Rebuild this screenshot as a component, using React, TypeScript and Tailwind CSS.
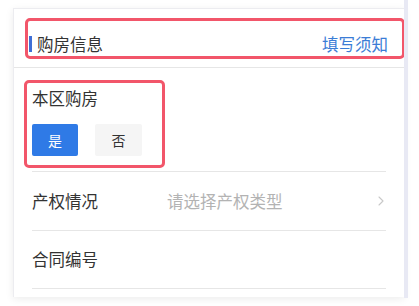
import { ChevronRight } from 'lucide-react';

const font = { fontFamily: '"Noto Sans CJK SC", "Noto Sans", sans-serif' };

export default function App() {
  return (
    <div className="flex w-[419px] h-[306px] bg-white overflow-hidden" style={font}>
      <div className="w-[13px] shrink-0" />
      {/* card */}
      <div className="mt-2 w-[391px] h-[289px] flex flex-col bg-white border-l border-t border-[#ececf0] shadow-[0_2px_8px_rgba(0,0,0,0.08)]">
        {/* header */}
        <div className="pt-[9px] pl-[11px] pb-2 border-b border-[#e6e6e6]">
          <div className="h-[41px] w-[380px] rounded-[5px] border-[3px] border-[#f2566a] flex items-start pt-[12px] pl-[1px] pr-[14px]">
            <div className="w-[3px] h-4 mt-[3px] bg-[#3f6fd6]" />
            <span className="ml-[5px] text-[16.5px] leading-[22px] text-[#333]">购房信息</span>
            <span className="ml-auto text-[16.5px] leading-[22px] text-[#3b7dd6]">填写须知</span>
          </div>
        </div>
        {/* 本区购房 */}
        <div className="mx-[18px] pt-3 pb-[3px] border-b border-[#e6e6e6]">
          <div className="-ml-2 w-[141px] h-[88px] rounded-[5px] border-[3px] border-[#f2566a] pl-[5px] pt-[4px]">
            <div className="text-[16.5px] leading-[22px] text-[#333]">本区购房</div>
            <div className="mt-[15px] flex gap-[17px]">
              <button className="w-[46px] h-8 rounded-[2px] bg-[#2f7ae6] text-white text-[14px]">是</button>
              <button className="w-[47px] h-8 rounded-[2px] bg-[#f5f5f5] text-[#333] text-[14px]">否</button>
            </div>
          </div>
        </div>
        {/* 产权情况 */}
        <div className="mx-[18px] h-[59px] flex items-center border-b border-[#e6e6e6]">
          <span className="w-[135px] text-[16.5px] text-[#333]">产权情况</span>
          <span className="text-[16.5px] text-[#b3b3b3]">请选择产权类型</span>
          <ChevronRight className="ml-auto -mr-[3px] w-[16px] h-[16px] text-[#c8c8c8]" strokeWidth={1.6} />
        </div>
        {/* 合同编号 */}
        <div className="mx-[18px] h-[58px] flex items-center border-b border-[#e6e6e6]">
          <span className="text-[16.5px] text-[#333]">合同编号</span>
        </div>
      </div>
      <div className="w-1 h-[298px] bg-[#e8e9f4]" />
    </div>
  );
}
